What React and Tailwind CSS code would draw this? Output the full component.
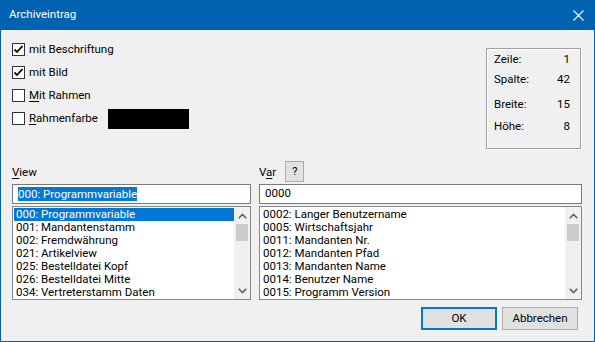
import React from 'react';

const font = { fontFamily: 'Roboto, "Noto Sans", "Liberation Sans", sans-serif' };

const viewItems = [
    '000: Programmvariable',
    '001: Mandantenstamm',
    '002: Fremdwährung',
    '021: Artikelview',
    '025: Bestelldatei Kopf',
    '026: Bestelldatei Mitte',
    '034: Vertreterstamm Daten',
];

const varItems = [
    '0002: Langer Benutzername',
    '0005: Wirtschaftsjahr',
    '0011: Mandanten Nr.',
    '0012: Mandanten Pfad',
    '0013: Mandanten Name',
    '0014: Benutzer Name',
    '0015: Programm Version',
];

function CheckBox({ checked, children }) {
    return (
        <div className="flex items-center h-[23px]">
            <div className="w-[13px] h-[13px] bg-white border border-[#333] flex items-center justify-center">
                {checked && (
                    <svg width="11" height="11" viewBox="0 0 11 11">
                        <path d="M1.5 5.5 L4 8 L9.5 2" fill="none" stroke="#000" strokeWidth="1.8" />
                    </svg>
                )}
            </div>
            <span className="ml-[4px] text-[11.5px] text-black">{children}</span>
        </div>
    );
}

function Chevron({ up }) {
    return (
        <svg width="9" height="6" viewBox="0 0 9 6">
            <path
                d={up ? 'M0.8 5.2 L4.5 1.5 L8.2 5.2' : 'M0.8 0.8 L4.5 4.5 L8.2 0.8'}
                fill="none"
                stroke="#606060"
                strokeWidth="1.6"
            />
        </svg>
    );
}

function ListBox({ items, selected }) {
    return (
        <div className="mt-[2px] h-[94px] bg-white border border-[#828790] flex">
            <div className="flex-1 pl-[1px] pt-[1px] overflow-hidden">
                {items.map((item, i) => (
                    <div
                        key={item}
                        className={`h-[13px] leading-[13px] text-[11.5px] pl-[2px] whitespace-nowrap ${
                            i === selected ? 'bg-[#0078D7] text-white' : 'text-black'
                        }`}
                    >
                        {item}
                    </div>
                ))}
            </div>
            <div className="w-[16px] bg-[#F0F0F0] flex flex-col">
                <div className="h-[17px] flex items-center justify-center">
                    <Chevron up />
                </div>
                <div className="mx-[2px] h-[17px] bg-[#CDCDCD]"></div>
                <div className="flex-1"></div>
                <div className="h-[17px] flex items-center justify-center">
                    <Chevron />
                </div>
            </div>
        </div>
    );
}

function StatRow({ label, value, className }) {
    return (
        <div className={`flex justify-between h-[16px] items-center text-[11.5px] text-black ${className}`}>
            <span>{label}</span>
            <span>{value}</span>
        </div>
    );
}

export default function App() {
    return (
        <div className="w-[595px] h-[342px] bg-[#0063B1] flex flex-col overflow-hidden" style={font}>
            <div className="h-[30px] flex items-center justify-between pl-[9px] pr-[11px] shrink-0">
                <span className="text-white text-[11.5px]">Archiveintrag</span>
                <svg width="11" height="11" viewBox="0 0 11 11">
                    <path d="M0.5 0.5 L10.5 10.5 M10.5 0.5 L0.5 10.5" stroke="#fff" strokeWidth="1.1" />
                </svg>
            </div>
            <div className="flex-1 mx-[1px] mb-[1px] bg-[#F0F0F0] flex flex-col pl-[11px] pr-[12px] pt-[8px] pb-[11px]">
                <div className="flex justify-between h-[111px]">
                    <div className="flex flex-col">
                        <CheckBox checked>mit Beschriftung</CheckBox>
                        <CheckBox checked>mit Bild</CheckBox>
                        <CheckBox>
                            <span className="underline underline-offset-2">M</span>it Rahmen
                        </CheckBox>
                        <div className="flex items-center">
                            <div className="w-[96px]">
                                <CheckBox>
                                    <span className="underline underline-offset-2">R</span>ahmenfarbe
                                </CheckBox>
                            </div>
                            <div className="w-[81px] h-[20px] bg-black"></div>
                        </div>
                    </div>
                    <div className="mt-[10px] mr-[1px] w-[95px] h-[101px] border border-[#A0A0A0] shadow-[1px_1px_0_#fff,inset_1px_1px_0_#fff] pl-[7px] pr-[10px] pt-[3px]">
                        <StatRow label="Zeile:" value="1" />
                        <StatRow label="Spalte:" value="42" className="mt-[4px]" />
                        <StatRow label="Breite:" value="15" className="mt-[9px]" />
                        <StatRow label="Höhe:" value="8" className="mt-[6px]" />
                    </div>
                </div>

                <div className="mt-[12px] flex gap-[8px]">
                    <div className="w-[239px] flex flex-col">
                        <div className="h-[21px] flex items-center pt-[3px] text-[11.5px] text-black">
                            <span className="underline underline-offset-2">V</span>iew
                        </div>
                        <div className="mt-[2px] h-[20px] bg-white border border-[#7A7A7A] flex items-center pl-[5px]">
                            <span className="bg-[#0078D7] text-white text-[11.5px] leading-[14px]">000: Programmvariable</span>
                        </div>
                        <ListBox items={viewItems} selected={0} />
                    </div>
                    <div className="flex-1 flex flex-col">
                        <div className="h-[21px] flex items-center text-[11.5px] text-black">
                            <span className="pt-[3px]">
                                V<span className="underline underline-offset-2">a</span>r
                            </span>
                            <button className="ml-[9px] w-[19px] h-[21px] bg-[#E1E1E1] border border-[#ADADAD] text-[11px] leading-none">
                                ?
                            </button>
                        </div>
                        <div className="mt-[2px] h-[20px] bg-white border border-[#7A7A7A] flex items-center pl-[5px]">
                            <span className="text-black text-[11.5px]">0000</span>
                        </div>
                        <ListBox items={varItems} selected={-1} />
                    </div>
                </div>

                <div className="mt-[7px] flex justify-end gap-[5px] pr-[4px]">
                    <button className="w-[76px] h-[23px] bg-[#E1E1E1] border border-[#0078D7] shadow-[inset_0_0_0_1px_#0078D7] text-[11.5px] text-black">
                        OK
                    </button>
                    <button className="w-[76px] h-[23px] bg-[#E1E1E1] border border-[#ADADAD] text-[11.5px] text-black">
                        Abbrechen
                    </button>
                </div>
            </div>
        </div>
    );
}
